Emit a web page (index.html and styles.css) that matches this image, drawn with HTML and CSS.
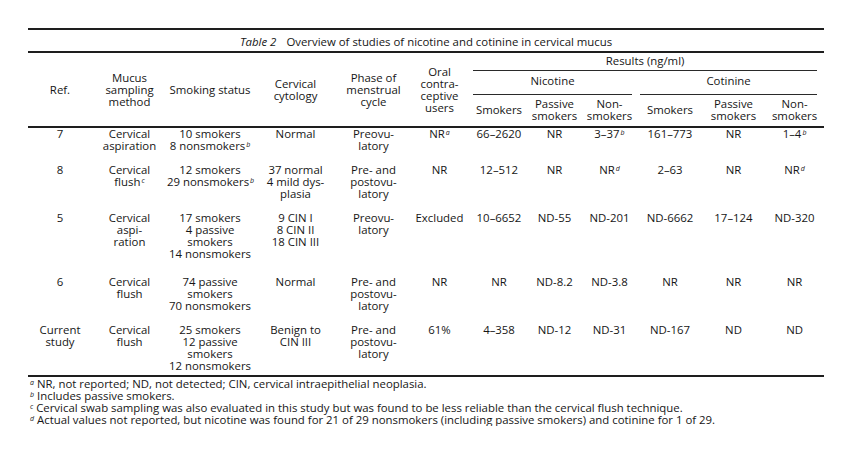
FILE: index.html
```html
<!DOCTYPE html>
<html lang="en">
<head>
<meta charset="utf-8">
<title>Table 2</title>
<link rel="stylesheet" href="styles.css">
</head>
<body>
<div class="page">
  <table class="tbl">
    <colgroup>
      <col class="c-ref"><col class="c-mucus"><col class="c-smoke"><col class="c-cyto"><col class="c-phase"><col class="c-oral">
      <col class="c-ns"><col class="c-np"><col class="c-nn"><col class="c-cs"><col class="c-cp"><col class="c-cn">
    </colgroup>
    <thead>
      <tr>
        <th colspan="12" class="title"><i>Table 2</i><span class="title-gap"></span>Overview of studies of nicotine and cotinine in cervical mucus</th>
      </tr>
      <tr>
        <th rowspan="3" class="hd">Ref.</th>
        <th rowspan="3" class="hd">Mucus<br>sampling<br>method</th>
        <th rowspan="3" class="hd">Smoking status</th>
        <th rowspan="3" class="hd">Cervical<br>cytology</th>
        <th rowspan="3" class="hd">Phase of<br>menstrual<br>cycle</th>
        <th rowspan="3" class="hd">Oral<br>contra-<br>ceptive<br>users</th>
        <th colspan="6" class="grp"><div class="rule rule-results">Results (ng/ml)</div></th>
      </tr>
      <tr>
        <th colspan="3" class="grp"><div class="rule rule-nic">Nicotine</div></th>
        <th colspan="3" class="grp"><div class="rule rule-cot">Cotinine</div></th>
      </tr>
      <tr>
        <th class="sub">Smokers</th>
        <th class="sub">Passive<br>smokers</th>
        <th class="sub">Non-<br>smokers</th>
        <th class="sub">Smokers</th>
        <th class="sub">Passive<br>smokers</th>
        <th class="sub">Non-<br>smokers</th>
      </tr>
    </thead>
    <tbody>
      <tr class="first">
        <td>7</td>
        <td>Cervical<br>aspiration</td>
        <td>10 smokers<br>8 nonsmokers<sup>b</sup></td>
        <td>Normal</td>
        <td>Preovu-<br>latory</td>
        <td>NR<sup>a</sup></td>
        <td>66–2620</td>
        <td>NR</td>
        <td>3–37<sup>b</sup></td>
        <td>161–773</td>
        <td>NR</td>
        <td>1–4<sup>b</sup></td>
      </tr>
      <tr>
        <td>8</td>
        <td>Cervical<br>flush<sup>c</sup></td>
        <td>12 smokers<br>29 nonsmokers<sup>b</sup></td>
        <td>37 normal<br>4 mild dys-<br>plasia</td>
        <td>Pre- and<br>postovu-<br>latory</td>
        <td>NR</td>
        <td>12–512</td>
        <td>NR</td>
        <td>NR<sup>d</sup></td>
        <td>2–63</td>
        <td>NR</td>
        <td>NR<sup>d</sup></td>
      </tr>
      <tr class="tall">
        <td>5</td>
        <td>Cervical<br>aspi-<br>ration</td>
        <td>17 smokers<br>4 passive<br>smokers<br>14 nonsmokers</td>
        <td>9 CIN I<br>8 CIN II<br>18 CIN III</td>
        <td>Preovu-<br>latory</td>
        <td>Excluded</td>
        <td>10–6652</td>
        <td>ND-55</td>
        <td>ND-201</td>
        <td>ND-6662</td>
        <td>17–124</td>
        <td>ND-320</td>
      </tr>
      <tr>
        <td>6</td>
        <td>Cervical<br>flush</td>
        <td>74 passive<br>smokers<br>70 nonsmokers</td>
        <td>Normal</td>
        <td>Pre- and<br>postovu-<br>latory</td>
        <td>NR</td>
        <td>NR</td>
        <td>ND-8.2</td>
        <td>ND-3.8</td>
        <td>NR</td>
        <td>NR</td>
        <td>NR</td>
      </tr>
      <tr class="last">
        <td>Current<br>study</td>
        <td>Cervical<br>flush</td>
        <td>25 smokers<br>12 passive<br>smokers<br>12 nonsmokers</td>
        <td>Benign to<br>CIN III</td>
        <td>Pre- and<br>postovu-<br>latory</td>
        <td>61%</td>
        <td>4–358</td>
        <td>ND-12</td>
        <td>ND-31</td>
        <td>ND-167</td>
        <td>ND</td>
        <td>ND</td>
      </tr>
    </tbody>
  </table>
  <div class="notes">
    <p><sup>a</sup> NR, not reported; ND, not detected; CIN, cervical intraepithelial neoplasia.</p>
    <p><sup>b</sup> Includes passive smokers.</p>
    <p><sup>c</sup> Cervical swab sampling was also evaluated in this study but was found to be less reliable than the cervical flush technique.</p>
    <p><sup>d</sup> Actual values not reported, but nicotine was found for 21 of 29 nonsmokers (including passive smokers) and cotinine for 1 of 29.</p>
  </div>
</div>
</body>
</html>
```

FILE: styles.css
```css
html, body {
  margin: 0;
  padding: 0;
  background: #ffffff;
}

body {
  font-family: "Open Sans", "Lato", sans-serif;
  font-size: 11.4px;
  line-height: 12px;
  color: #161616;
}

.page {
  padding: 28px 0 0 28px;
  width: 796px;
}

.tbl {
  width: 796px;
  table-layout: fixed;
  border-collapse: separate;
  border-spacing: 0;
}

.c-ref { width: 64px; }
.c-mucus { width: 75px; }
.c-smoke { width: 86px; }
.c-cyto { width: 85px; }
.c-phase { width: 71px; }
.c-oral { width: 61px; }
.c-ns { width: 58px; }
.c-np { width: 53px; }
.c-nn { width: 57px; }
.c-cs { width: 64px; }
.c-cp { width: 63px; }
.c-cn { width: 59px; }

th, td {
  padding: 0;
  font-weight: normal;
  text-align: center;
  white-space: nowrap;
}

.title {
  border-top: 2px solid #1e1e1e;
  border-bottom: 2px solid #1e1e1e;
  padding: 6px 0 3px;
}

.title i {
  font-style: italic;
}

.title-gap {
  display: inline-block;
  width: 10px;
}

.hd {
  vertical-align: middle;
  border-bottom: 2px solid #1e1e1e;
}

.grp {
  vertical-align: top;
}

.rule {
  border-bottom: 1px solid #2a2a2a;
}

.rule-results {
  padding: 2px 0 3px;
  margin: 0 7px 0 3px;
}

.rule-nic {
  padding: 4px 0 7px;
  margin: 0 6px 0 3px;
}

.rule-cot {
  padding: 4px 0 7px;
  margin: 0 7px 0 2px;
}

.sub {
  vertical-align: middle;
  padding: 3px 0 4px;
  border-bottom: 2px solid #1e1e1e;
}

tbody td {
  vertical-align: top;
  padding: 0 0 12px;
}

tbody tr.tall td {
  padding-bottom: 16px;
}

tbody tr.last td {
  padding-bottom: 3px;
  border-bottom: 2px solid #1e1e1e;
}

sup {
  font-size: 7px;
  font-style: italic;
  line-height: 0;
  vertical-align: 3px;
  margin-left: 1px;
}

.notes {
  padding-top: 1px;
}

.notes p {
  margin: 0;
  padding-left: 2px;
  line-height: 12px;
}

.notes sup {
  margin-left: 0;
}
```
